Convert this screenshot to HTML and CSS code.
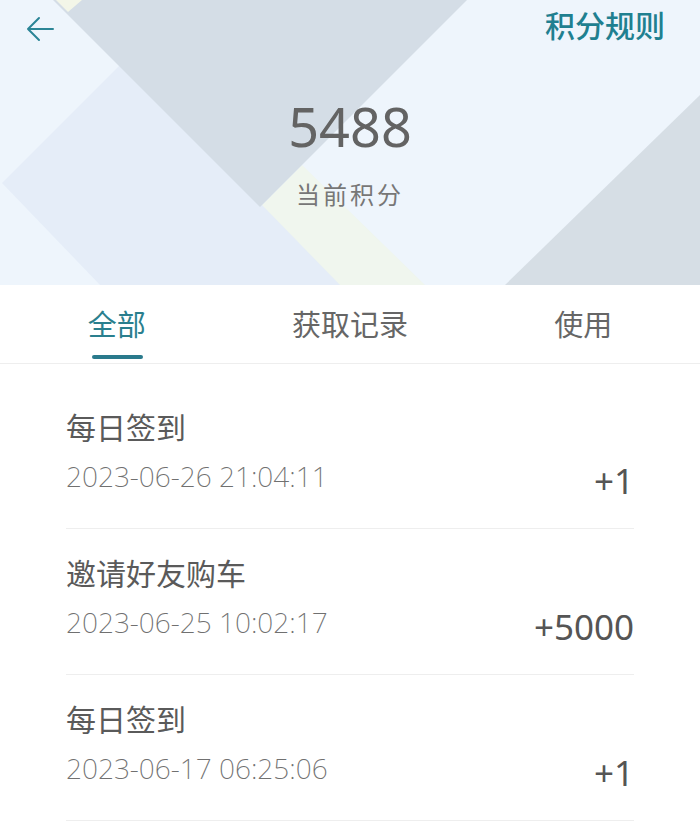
FILE: index.html
```html
<!DOCTYPE html>
<html lang="zh-CN">
<head>
    <meta charset="UTF-8">
    <meta name="viewport" content="width=device-width, initial-scale=1.0">
    <title>我的积分</title>
    <link rel="stylesheet" href="styles.css">
</head>
<body>
    <div class="header">
        <svg class="header-bg" viewBox="0 0 700 285" preserveAspectRatio="none">
            <rect width="700" height="285" fill="#eef5fc"/>
            <polygon points="2,183 130,55 360,285 100,285" fill="#e5edf8"/>
            <polygon points="262,205 302,165 425,285 340,285" fill="#f0f6ee"/>
            <polygon points="53,0 467,0 260,207" fill="#d4dde6"/>
            <polygon points="56,0 82,0 68,12" fill="#f3f6e8"/>
            <polygon points="700,95 700,285 505,285" fill="#d6dee5"/>
        </svg>
        <div class="topbar">
            <a class="back" href="#">
                <svg width="30" height="30" viewBox="0 0 30 30">
                    <path d="M28 14H3M14 3L3 14L14 25" fill="none" stroke="#2b8596" stroke-width="2" stroke-linecap="round" stroke-linejoin="round"/>
                </svg>
            </a>
            <a class="rules" href="#">积分规则</a>
        </div>
        <div class="score">
            <div class="score-value">5488</div>
            <div class="score-label">当前积分</div>
        </div>
    </div>

    <div class="tabs">
        <div class="tab active">全部</div>
        <div class="tab">获取记录</div>
        <div class="tab">使用</div>
    </div>

    <div class="list">
        <div class="item">
            <div class="item-title">每日签到</div>
            <div class="item-row">
                <span class="item-date">2023-06-26 21:04:11</span>
                <span class="item-amount">+1</span>
            </div>
        </div>
        <div class="item">
            <div class="item-title">邀请好友购车</div>
            <div class="item-row">
                <span class="item-date">2023-06-25 10:02:17</span>
                <span class="item-amount">+5000</span>
            </div>
        </div>
        <div class="item">
            <div class="item-title">每日签到</div>
            <div class="item-row">
                <span class="item-date">2023-06-17 06:25:06</span>
                <span class="item-amount">+1</span>
            </div>
        </div>
    </div>
</body>
</html>
```

FILE: styles.css
```css
body {
    margin: 0;
    background-color: #FFFFFF;
    font-family: "Noto Sans", "Noto Sans CJK SC", sans-serif;
    color: #5a5a5a;
}

.header {
    position: relative;
    height: 285px;
    overflow: hidden;
}

.header-bg {
    position: absolute;
    top: 0;
    left: 0;
    width: 100%;
    height: 100%;
}

.topbar {
    position: relative;
    display: flex;
    justify-content: space-between;
    align-items: flex-start;
    padding: 6px 35px 0 25px;
}

.back {
    display: block;
    margin-top: 9px;
    height: 30px;
}

.rules {
    font-family: "Noto Sans CJK SC", sans-serif;
    font-size: 30px;
    line-height: 36px;
    color: #1f8090;
    text-decoration: none;
    font-weight: 500;
}

.score {
    position: relative;
    display: flex;
    flex-direction: column;
    align-items: center;
    margin-top: 51px;
}

.score-value {
    font-size: 54px;
    line-height: 60px;
    color: #636363;
}

.score-label {
    margin-top: 20px;
    font-family: "Noto Sans CJK SC", sans-serif;
    font-size: 24px;
    line-height: 36px;
    letter-spacing: 3px;
    color: #777777;
}

.tabs {
    display: flex;
    height: 78px;
    border-bottom: 1px solid #eeeeee;
}

.tab {
    flex: 1;
    position: relative;
    text-align: center;
    padding-top: 18px;
    font-family: "Noto Sans CJK SC", sans-serif;
    font-size: 29px;
    line-height: 40px;
    color: #666666;
}

.tab.active {
    color: #2a7f8e;
}

.tab.active::after {
    content: "";
    position: absolute;
    left: 50%;
    bottom: 4px;
    width: 51px;
    height: 4px;
    margin-left: -25px;
    border-radius: 2px;
    background-color: #2a7a8c;
}

.list {
    padding: 19px 66px 0 66px;
}

.item {
    padding: 25px 0 29px 0;
    border-bottom: 1px solid #eeeeee;
}

.item-title {
    font-family: "Noto Sans CJK SC", sans-serif;
    font-size: 30px;
    line-height: 36px;
    color: #5a5a5a;
}

.item-row {
    display: flex;
    justify-content: space-between;
    align-items: flex-start;
    margin-top: 14px;
}

.item-date {
    font-size: 28px;
    line-height: 36px;
    font-weight: 200;
    color: #707070;
}

.item-amount {
    margin-top: 5px;
    font-size: 35px;
    line-height: 36px;
    color: #555555;
}
```
